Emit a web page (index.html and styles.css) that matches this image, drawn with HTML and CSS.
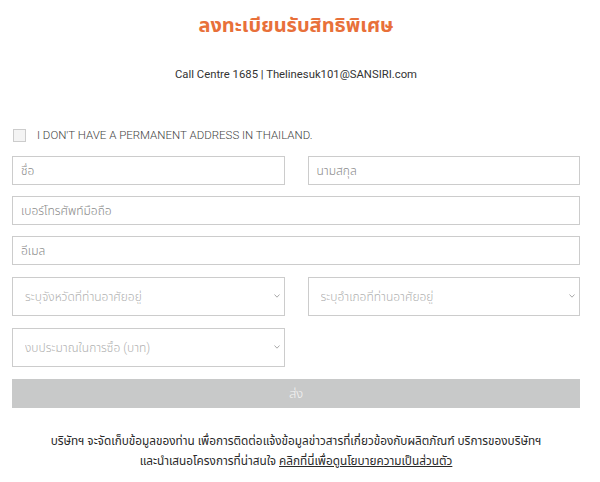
FILE: index.html
```html
<!DOCTYPE html>
<html lang="th">
<head>
  <meta charset="UTF-8" />
  <meta name="viewport" content="width=device-width, initial-scale=1.0"/>
  <title>ลงทะเบียนรับสิทธิพิเศษ</title>
  <link rel="stylesheet" href="styles.css">
</head>
<body>
  <div class="container">
    <h1 class="title">ลงทะเบียนรับสิทธิพิเศษ</h1>
    <p class="contact">Call Centre 1685 | Thelinesuk101@SANSIRI.com</p>

    <label class="check">
      <input type="checkbox" />
      <span>I DON'T HAVE A PERMANENT ADDRESS IN THAILAND.</span>
    </label>

    <div class="form">
      <input type="text" class="field" placeholder="ชื่อ" />
      <input type="text" class="field" placeholder="นามสกุล" />
      <input type="tel" class="field wide" placeholder="เบอร์โทรศัพท์มือถือ" />
      <input type="email" class="field wide" placeholder="อีเมล" />

      <div class="select-wrap">
        <select class="select">
          <option>ระบุจังหวัดที่ท่านอาศัยอยู่</option>
        </select>
        <svg class="chevron" width="6" height="4" viewBox="0 0 6 4"><path d="M0.5 0.5 L3 3.2 L5.5 0.5" fill="none" stroke="#aaa" stroke-width="1"/></svg>
      </div>
      <div class="select-wrap">
        <select class="select">
          <option>ระบุอำเภอที่ท่านอาศัยอยู่</option>
        </select>
        <svg class="chevron" width="6" height="4" viewBox="0 0 6 4"><path d="M0.5 0.5 L3 3.2 L5.5 0.5" fill="none" stroke="#aaa" stroke-width="1"/></svg>
      </div>
      <div class="select-wrap">
        <select class="select">
          <option>งบประมาณในการซื้อ (บาท)</option>
        </select>
        <svg class="chevron" width="6" height="4" viewBox="0 0 6 4"><path d="M0.5 0.5 L3 3.2 L5.5 0.5" fill="none" stroke="#aaa" stroke-width="1"/></svg>
      </div>

      <button class="submit wide">ส่ง</button>
    </div>

    <p class="note">บริษัทฯ จะจัดเก็บข้อมูลของท่าน เพื่อการติดต่อแจ้งข้อมูลข่าวสารที่เกี่ยวข้องกับผลิตภัณฑ์ บริการของบริษัทฯ<br>
    และนำเสนอโครงการที่น่าสนใจ <a href="#">คลิกที่นี่เพื่อดูนโยบายความเป็นส่วนตัว</a></p>
  </div>
</body>
</html>
```

FILE: styles.css
```css
* {
  box-sizing: border-box;
}
body, html {
  margin: 0;
  padding: 0;
  background: white;
  font-family: Roboto, "Noto Sans Thai", "Noto Sans", sans-serif;
  color: #333;
}
.container {
  padding: 11px 20px 0 12px;
}
.title {
  margin: 0;
  text-align: center;
  font-size: 20px;
  line-height: 29px;
  font-weight: 700;
  color: #e8703a;
}
.contact {
  margin: 27px 0 0;
  text-align: center;
  font-size: 11.3px;
  line-height: 16px;
  color: #333;
}
.check {
  display: flex;
  align-items: center;
  gap: 11px;
  margin-top: 44px;
  height: 16px;
  font-size: 11.5px;
  font-weight: 300;
  color: #444;
}
.check input {
  margin: 0 0 0 1px;
  width: 13px;
  height: 13px;
  appearance: none;
  border: 1px solid #ccc;
  background: #f4f4f4;
}
.form {
  display: grid;
  grid-template-columns: 1fr 1fr;
  column-gap: 23px;
  row-gap: 11px;
  margin-top: 13px;
}
.wide {
  grid-column: span 2;
}
.field, .select {
  width: 100%;
  margin: 0;
  border: 1px solid #ccc;
  border-radius: 0;
  background: white;
  font-family: inherit;
  font-size: 12px;
  font-weight: 300;
  outline: none;
}
.field {
  height: 29px;
  padding: 0 8px;
  color: #333;
}
.field::placeholder {
  color: #888;
}
.select-wrap {
  position: relative;
  margin-top: 1px;
}
.select {
  appearance: none;
  height: 39px;
  padding: 0 12px;
  color: #b0b0b0;
}
.chevron {
  position: absolute;
  right: 5px;
  top: 17px;
}
.submit {
  height: 29px;
  margin-top: 1px;
  border: none;
  background: #c8c9c9;
  color: #f4f4f4;
  font-family: inherit;
  font-size: 13px;
  font-weight: 300;
}
.note {
  margin: 23px 0 0;
  text-align: center;
  font-size: 11.8px;
  line-height: 20px;
  color: #2a2a2a;
}
.note a {
  color: #2a2a2a;
}
```
